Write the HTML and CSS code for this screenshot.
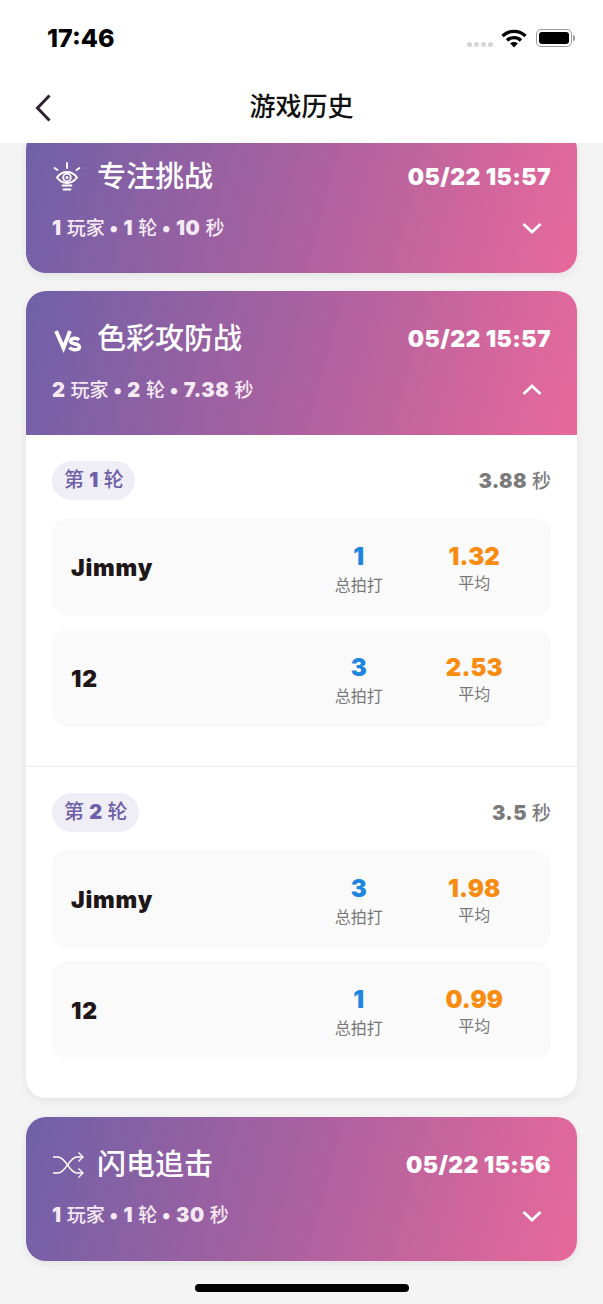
FILE: index.html
```html
<!DOCTYPE html>
<html lang="zh-CN">
<head>
  <meta charset="UTF-8">
  <meta name="viewport" content="width=device-width, initial-scale=1.0">
  <title>游戏历史</title>
  <link rel="stylesheet" href="styles.css">
</head>
<body>
  <div class="top">
    <div class="status">
      <span class="clock">17:46</span>
      <div class="status-icons">
        <span class="signal"><i></i><i></i><i></i><i></i></span>
        <svg class="wifi" width="26" height="19" viewBox="0 0 26 19">
          <path d="M1.5 7 A16.5 16.5 0 0 1 24.5 7" fill="none" stroke="#000" stroke-width="3.4"/>
          <path d="M6 11.4 A10.2 10.2 0 0 1 20 11.4" fill="none" stroke="#000" stroke-width="3.4"/>
          <path d="M9.2 14.6 A5.6 5.6 0 0 1 16.8 14.6 L13 18.6 Z" fill="#000"/>
        </svg>
        <span class="battery"><span class="battery-fill"></span></span>
        <span class="battery-cap"></span>
      </div>
    </div>
    <div class="nav">
      <svg class="back" width="18" height="30" viewBox="0 0 18 30">
        <path d="M15.5 2.5 L3.5 15 L15.5 27.5" fill="none" stroke="#2f2530" stroke-width="3"/>
      </svg>
      <h1 class="nav-title">游戏历史</h1>
    </div>
  </div>

  <div class="list">
    <div class="card card-first">
      <div class="card-head">
        <div class="head-row">
          <svg class="game-icon" width="32" height="30" viewBox="0 0 32 30" fill="none" stroke="#fff">
            <path d="M15 1v5M2.500 6l3 2M27.500 6l-3 2" stroke-width="1.800" stroke-linecap="round"/>
            <path d="M5 15.500C8 11.500 11.500 10 15 10s7 1.500 10 5.500C22 19.500 18.500 21 15 21s-7-1.500-10-5.500Z" stroke-width="2"/>
            <circle cx="15" cy="15.500" r="3.800" stroke-width="1.800"/>
            <circle cx="15" cy="15.500" r="1.600" fill="#fff" stroke="none"/>
            <path d="M10.500 23.500h9M11.500 27.500h7" stroke-width="1.800" stroke-linecap="round"/>
          </svg>
          <span class="game-name">专注挑战</span>
          <span class="game-time">05/22 15:57</span>
        </div>
        <div class="head-row meta-row">
          <span class="meta"><b>1</b> 玩家 <b>•</b> <b>1</b> 轮 <b>•</b> <b>10</b> 秒</span>
          <svg class="chev" width="22" height="14" viewBox="0 0 22 14"><path d="M2.500 3 L11 11 L19.500 3" fill="none" stroke="#fff" stroke-width="2.800"/></svg>
        </div>
      </div>
    </div>

    <div class="card">
      <div class="card-head">
        <div class="head-row">
          <svg class="game-icon" width="32" height="30" viewBox="0 0 32 30" fill="none" stroke="#fff" stroke-width="3.800">
            <path d="M4 7 L11.500 24 L18 7"/>
            <path d="M27 16C25 13.500 19 13.500 18.500 17C18.300 20.500 27.500 19 27.500 23C27.500 26.500 20 26.500 17.500 23.500" stroke-width="3.400"/>
          </svg>
          <span class="game-name">色彩攻防战</span>
          <span class="game-time">05/22 15:57</span>
        </div>
        <div class="head-row meta-row">
          <span class="meta"><b>2</b> 玩家 <b>•</b> <b>2</b> 轮 <b>•</b> <b>7.38</b> 秒</span>
          <svg class="chev" width="22" height="14" viewBox="0 0 22 14"><path d="M2.500 11 L11 3 L19.500 11" fill="none" stroke="#fff" stroke-width="2.800"/></svg>
        </div>
      </div>

      <div class="round">
        <div class="round-head">
          <span class="chip">第 <b>1</b> 轮</span>
          <span class="round-time"><b>3.88</b> 秒</span>
        </div>
        <div class="player">
          <span class="player-name">Jimmy</span>
          <div class="stat"><span class="num num-blue">1</span><span class="stat-label stat-label-low">总拍打</span></div>
          <div class="stat"><span class="num num-orange">1.32</span><span class="stat-label">平均</span></div>
        </div>
        <div class="player">
          <span class="player-name">12</span>
          <div class="stat"><span class="num num-blue">3</span><span class="stat-label stat-label-low">总拍打</span></div>
          <div class="stat"><span class="num num-orange">2.53</span><span class="stat-label">平均</span></div>
        </div>
      </div>

      <div class="round round-next">
        <div class="round-head">
          <span class="chip">第 <b>2</b> 轮</span>
          <span class="round-time"><b>3.5</b> 秒</span>
        </div>
        <div class="player">
          <span class="player-name">Jimmy</span>
          <div class="stat"><span class="num num-blue">3</span><span class="stat-label stat-label-low">总拍打</span></div>
          <div class="stat"><span class="num num-orange">1.98</span><span class="stat-label">平均</span></div>
        </div>
        <div class="player">
          <span class="player-name">12</span>
          <div class="stat"><span class="num num-blue">1</span><span class="stat-label stat-label-low">总拍打</span></div>
          <div class="stat"><span class="num num-orange">0.99</span><span class="stat-label">平均</span></div>
        </div>
      </div>
    </div>

    <div class="card">
      <div class="card-head">
        <div class="head-row">
          <svg class="game-icon" width="32" height="30" viewBox="0 0 32 30" fill="none" stroke="#fff" stroke-width="1.400">
            <path d="M1 7h5c8 0 11 16 19 16h6"/>
            <path d="M1 23h5c8 0 11-16 19-16h6"/>
            <path d="M26.500 2.500 31 7l-4.500 4.500M26.500 18.500 31 23l-4.500 4.500"/>
          </svg>
          <span class="game-name">闪电追击</span>
          <span class="game-time">05/22 15:56</span>
        </div>
        <div class="head-row meta-row">
          <span class="meta"><b>1</b> 玩家 <b>•</b> <b>1</b> 轮 <b>•</b> <b>30</b> 秒</span>
          <svg class="chev" width="22" height="14" viewBox="0 0 22 14"><path d="M2.500 3 L11 11 L19.500 3" fill="none" stroke="#fff" stroke-width="2.800"/></svg>
        </div>
      </div>
    </div>
  </div>

  <div class="home-bar"></div>
</body>
</html>
```

FILE: styles.css
```css
* {
  box-sizing: border-box;
}
html, body {
  margin: 0;
  height: 100%;
}
body {
  position: relative;
  height: 1304px;
  overflow: hidden;
  background: #f4f4f5;
  font-family: Inter, "Noto Sans CJK SC", sans-serif;
}
b {
  font-weight: 900;
}

.top {
  position: relative;
  z-index: 2;
  height: 143px;
  background: #fff;
}
.status {
  height: 71px;
  display: flex;
  justify-content: space-between;
  padding: 23px 28px 0 47px;
}
.clock {
  font-size: 25px;
  line-height: 30px;
  font-weight: 800;
  color: #000;
}
.status-icons {
  display: flex;
  align-items: center;
  height: 30px;
}
.signal {
  display: flex;
  gap: 2px;
  margin: 13px 8px 0 0;
}
.signal i {
  width: 5px;
  height: 5px;
  border-radius: 50%;
  background: #d4d4d4;
}
.wifi {
  margin-right: 9px;
}
.battery {
  width: 36px;
  height: 18px;
  padding: 2px;
  border: 1.500px solid #9a9a9a;
  border-radius: 5px;
}
.battery-fill {
  display: block;
  height: 100%;
  border-radius: 3px;
  background: #000;
}
.battery-cap {
  width: 2px;
  height: 6px;
  margin-left: 1px;
  border-radius: 0 2px 2px 0;
  background: #9a9a9a;
}
.nav {
  position: relative;
  height: 72px;
  display: flex;
  align-items: center;
  justify-content: center;
}
.back {
  position: absolute;
  left: 34px;
  top: 22px;
}
.nav-title {
  margin: 0;
  font-size: 26px;
  line-height: 72px;
  font-weight: 500;
  color: #111;
}

.list {
  padding: 0 26px;
}
.card {
  margin-bottom: 18.500px;
  border-radius: 20px;
  overflow: hidden;
  background: #fff;
  box-shadow: 0 3px 10px rgba(0, 0, 0, 0.07);
}
.card-first {
  margin-top: -14px;
  margin-bottom: 18px;
}
.card-head {
  height: 144px;
  padding: 27px 26px 0;
  color: #fff;
  background: linear-gradient(105deg, #6f60a8 0%, #ab619f 50%, #e8699b 100%);
}
.head-row {
  display: flex;
  align-items: center;
  height: 42px;
}
.meta-row {
  height: 34px;
  margin-top: 11px;
  justify-content: space-between;
}
.game-icon {
  flex: none;
  margin-right: 13px;
}
.game-name {
  font-size: 29px;
  line-height: 42px;
  font-weight: 500;
}
.game-time {
  margin-left: auto;
  font-size: 23px;
  font-weight: 900;
  letter-spacing: 0.4px;
}
.meta {
  font-size: 19px;
  font-weight: 500;
  color: #f5eaf3;
}
.meta b {
  font-size: 20px;
  letter-spacing: 0.6px;
}
.chev {
  margin: 4px 8px 0 0;
}

.round {
  padding: 26px 26px 39px;
}
.round-next {
  border-top: 1px solid #e9e9ea;
}
.round-head {
  display: flex;
  align-items: center;
  justify-content: space-between;
  height: 39px;
  margin-bottom: 18px;
}
.chip {
  height: 39px;
  padding: 0 11px 0 12px;
  border-radius: 20px;
  font-size: 20px;
  line-height: 38px;
  font-weight: 500;
  color: #6f5fa6;
  background: #efedf6;
}
.round-time {
  margin-top: -3px;
  font-size: 19px;
  font-weight: 500;
  color: #7b7b7b;
}
.round-time b {
  font-size: 20px;
  letter-spacing: 0.4px;
}
.player {
  display: grid;
  grid-template-columns: 1fr 115.500px 115.500px;
  align-items: center;
  height: 98px;
  padding: 0 19px;
  margin-bottom: 13px;
  border-radius: 16px;
  background: #fafafa;
}
.player:last-child {
  margin-bottom: 0;
}
.player-name {
  padding-top: 2px;
  font-size: 23px;
  font-weight: 900;
  color: #1e1618;
  letter-spacing: 0.8px;
}
.stat {
  display: flex;
  flex-direction: column;
  align-items: center;
  padding-top: 4px;
}
.num {
  font-size: 24px;
  line-height: 28px;
  font-weight: 900;
  letter-spacing: 0.1px;
}
.num-blue {
  color: #1f86e0;
}
.num-orange {
  color: #f98c10;
}
.stat-label {
  font-size: 16px;
  line-height: 24px;
  color: #777;
}
.stat-label-low {
  transform: translateY(2px);
}

.home-bar {
  position: absolute;
  left: 195px;
  bottom: 12px;
  width: 214px;
  height: 8px;
  border-radius: 4px;
  background: #000;
}
```
